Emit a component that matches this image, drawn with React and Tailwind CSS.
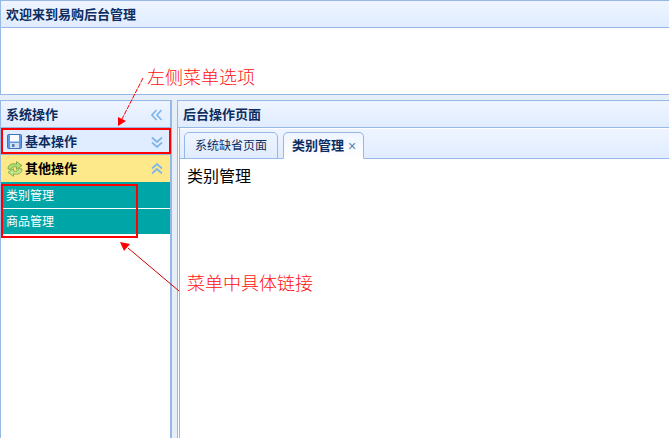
const FONT = "font-['Liberation_Sans','Noto_Sans_CJK_SC',sans-serif]";

function Chevrons({ dir, className }) {
  const rot = { left: 0, down: -90, up: 90 }[dir];
  return (
    <svg width="12" height="12" viewBox="0 0 12 12" className={className} fill="none" stroke="#7fb6ea" strokeWidth="1.7">
      <g transform={`rotate(${rot} 6 6)`}>
        <path d="M5.5 1 L1 6 L5.5 11" />
        <path d="M10.5 1 L6 6 L10.5 11" />
      </g>
    </svg>
  );
}

function Floppy() {
  return (
    <svg width="15" height="15" viewBox="0 0 15 15" className="shrink-0">
      <rect x="0.5" y="0.5" width="14" height="14" rx="1" fill="#5f97e6" stroke="#3f73c4" />
      <rect x="3" y="1" width="9" height="6.5" fill="#fbfdff" />
      <rect x="3" y="9" width="9" height="5" fill="#d5e0ee" />
      <rect x="5" y="10" width="2.5" height="3" fill="#5b7db0" />
    </svg>
  );
}

function Recycle() {
  return (
    <svg width="16" height="16" viewBox="0 0 16 16" className="shrink-0">
      <path d="M1 8 C1 3.5 5 2 9.5 3.2 L9.5 0.7 L15 4.6 L9.5 8.4 L9.5 6 C6.5 5.4 4.5 6 3.8 8.5 L1 8 Z" fill="#aede6e" stroke="#6f9f42" strokeWidth="0.8" />
      <path d="M15 8 C15 12.5 11 14 6.5 12.8 L6.5 15.3 L1 11.4 L6.5 7.6 L6.5 10 C9.5 10.6 11.5 10 12.2 7.5 L15 8 Z" fill="#c4e88c" stroke="#6f9f42" strokeWidth="0.8" />
    </svg>
  );
}

function Head({ children }) {
  return (
    <div className="h-[27px] shrink-0 flex items-center justify-between pt-px pl-[5px] pr-[7px] bg-gradient-to-b from-[#eff5ff] to-[#e0ecff] border-b border-[#95b8e7] text-[13px] font-bold text-[#0e2d5f]">
      {children}
    </div>
  );
}

export default function App() {
  return (
    <div className={`relative w-[669px] h-[438px] overflow-hidden flex flex-col bg-[#e6eef8] ${FONT}`}>
      <header className="h-[95px] shrink-0 flex flex-col bg-white border-t border-b border-l border-[#95b8e7]">
        <Head>欢迎来到易购后台管理</Head>
      </header>

      <div className="flex flex-1 min-h-0 pt-[5px] gap-[5px]">
        <aside className="w-[172px] shrink-0 flex flex-col bg-white border-t border-l border-r-2 border-[#95b8e7]">
          <Head>
            系统操作
            <Chevrons dir="left" />
          </Head>
          <div className="h-[27px] shrink-0 flex items-center gap-[3px] pt-px pl-[6px] pr-[7px] bg-[#e0ecff] text-[13px] font-bold text-[#0e2d5f] border-b border-[#95b8e7]">
            <Floppy />
            <span className="flex-1">基本操作</span>
            <Chevrons dir="down" />
          </div>
          <div className="h-[27px] shrink-0 flex items-center gap-[2px] pt-px pl-[6px] pr-[7px] bg-[#fde98a] text-[13px] font-bold text-black">
            <Recycle />
            <span className="flex-1">其他操作</span>
            <Chevrons dir="up" />
          </div>
          <nav className="flex flex-col text-xs text-white">
            <a className="h-[26px] flex items-center pt-[2px] pl-[5px] bg-[#00a5a8] mb-px">类别管理</a>
            <a className="h-[25px] flex items-center pl-[5px] bg-[#00a5a8]">商品管理</a>
          </nav>
        </aside>

        <main className="flex-1 min-w-0 flex flex-col bg-white border-t border-l border-[#95b8e7]">
          <Head>后台操作页面</Head>
          <div className="flex-1 min-h-0 flex flex-col ml-px border-l border-[#95b8e7]">
            <div className="h-[30px] shrink-0 mt-px flex items-end gap-[5px] pl-1 bg-gradient-to-b from-[#eff5ff] to-[#e0ecff] border-b border-[#95b8e7]">
              <div className="h-[27px] w-[94px] -mb-px flex items-center justify-center pt-px text-xs text-[#0e2d5f] bg-gradient-to-b from-[#eff5ff] to-[#e0ecff] border border-[#95b8e7] rounded-t-[5px]">
                系统缺省页面
              </div>
              <div className="h-[27px] w-[81px] -mb-px flex items-center gap-[4px] pt-px pl-[8px] text-[13px] font-bold text-[#0e2d5f] bg-gradient-to-b from-[#eff5ff] to-white border border-[#95b8e7] border-b-white rounded-t-[5px]">
                类别管理
                <span className="text-[#5a7fb5] text-sm font-normal leading-none">×</span>
              </div>
            </div>
            <div className="pl-[7px] pt-[8px] text-base leading-5 text-black">类别管理</div>
          </div>
        </main>
      </div>

      {/* annotations laid over the screenshot */}
      <div className="absolute left-[1px] top-[128px] w-[170px] h-[26px] border-2 border-[#ff0000]" />
      <div className="absolute left-[1px] top-[184px] w-[137px] h-[54px] border-2 border-[#ff0000]" />
      <svg width="669" height="438" className="absolute left-0 top-0 pointer-events-none">
        <path d="M143 78 L122 119" stroke="#ff0000" strokeWidth="1" strokeDasharray="5 1" fill="none" />
        <path d="M118 126 L118 117 L126 121 Z" fill="#ff0000" />
        <path d="M179 291 L128 248" stroke="#cc0000" strokeWidth="1" fill="none" />
        <path d="M120 242 L130 244 L124 251 Z" fill="#ff0000" />
      </svg>
      <div className="absolute left-[147px] top-[66px] text-lg leading-6 font-light text-[#ff1010]">左侧菜单选项</div>
      <div className="absolute left-[187px] top-[272px] text-lg leading-6 font-light text-[#ff1010]">菜单中具体链接</div>
    </div>
  );
}
